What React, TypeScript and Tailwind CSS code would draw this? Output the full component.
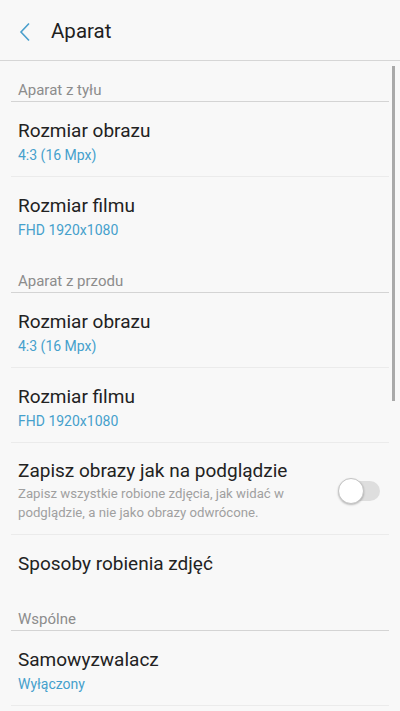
const font = { fontFamily: "Roboto, 'Noto Sans', sans-serif" };

function SectionHeader({ label, top }: { label: string; top: string }) {
  return (
    <div className={`${top} mx-[11px] border-b border-[#d4d4d4] pb-[1px] pl-[7px]`}>
      <div className="text-[15px] leading-5 text-[#8c8c8c]">{label}</div>
    </div>
  );
}

function Item({
  title,
  value,
  divider = true,
}: {
  title: string;
  value?: string;
  divider?: boolean;
}) {
  return (
    <div className={`mx-[11px] pl-[7px] ${divider ? "border-b border-[#ebebeb]" : ""}`}>
      <div className={value ? "pt-[17px] pb-[11px]" : "pt-[17px] pb-[14px]"}>
        <div className="text-[19px] leading-6 text-[#222222]">{title}</div>
        {value && (
          <div className="mt-[2px] text-[14px] leading-5 text-[#45a0cc]">{value}</div>
        )}
      </div>
    </div>
  );
}

function Toggle() {
  return (
    <div className="relative h-[28px] w-[43px] shrink-0">
      <div className="absolute left-[6px] top-[4px] h-[20px] w-[36px] rounded-full bg-[#dedede]" />
      <div className="absolute left-0 top-px h-[26px] w-[26px] rounded-full border border-[#c4c4c4] bg-white shadow-[0_1px_2px_rgba(0,0,0,0.25)]" />
    </div>
  );
}

export default function App() {
  return (
    <div className="relative h-[711px] w-[400px] overflow-hidden bg-[#f8f8f8]" style={font}>
      <div className="flex h-[61px] items-center border-b border-[#d6d6d6] pt-[3px]">
        <svg className="ml-[19px]" width="12" height="20" viewBox="0 0 12 20">
          <path d="M10 1.5 L2 10 L10 18.5" fill="none" stroke="#4a9fcc" strokeWidth="1.6" />
        </svg>
        <div className="ml-[20px] text-[20.5px] text-[#1f1f1f]">Aparat</div>
      </div>

      <SectionHeader label="Aparat z tyłu" top="pt-[19px]" />
      <Item title="Rozmiar obrazu" value="4:3 (16 Mpx)" />
      <Item title="Rozmiar filmu" value="FHD 1920x1080" divider={false} />

      <SectionHeader label="Aparat z przodu" top="pt-[20px]" />
      <Item title="Rozmiar obrazu" value="4:3 (16 Mpx)" />
      <Item title="Rozmiar filmu" value="FHD 1920x1080" />

      <div className="mx-[11px] flex items-start border-b border-[#ebebeb] pb-[12px] pl-[7px] pt-[16px]">
        <div className="flex-1">
          <div className="text-[19px] leading-6 text-[#222222]">Zapisz obrazy jak na podglądzie</div>
          <div className="mt-[1px] pr-2 text-[13.2px] leading-[19px] text-[#a0a0a0]">
            Zapisz wszystkie robione zdjęcia, jak widać w podglądzie, a nie jako obrazy odwrócone.
          </div>
        </div>
        <div className="mr-[8px] mt-[18px]">
          <Toggle />
        </div>
      </div>

      <Item title="Sposoby robienia zdjęć" divider={false} />

      <SectionHeader label="Wspólne" top="pt-[19px]" />
      <Item title="Samowyzwalacz" value="Wyłączony" />

      <div className="absolute right-[5px] top-[66px] h-[335px] w-[3px] bg-[#a9a9a9]" />
    </div>
  );
}
